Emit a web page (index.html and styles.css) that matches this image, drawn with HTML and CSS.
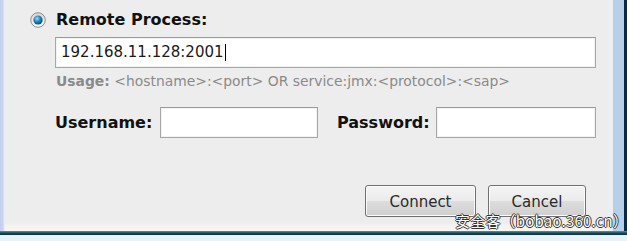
FILE: index.html
```html
<!DOCTYPE html>
<html>
<head>
<meta charset="utf-8">
<link rel="stylesheet" href="styles.css">
</head>
<body>
<div class="window">
  <div class="frame-left"></div>
  <div class="content">
    <div class="radio-row">
      <svg class="radio" width="16" height="16" viewBox="0 0 16 16">
        <defs>
          <radialGradient id="rg" cx="0.4" cy="0.35" r="0.7">
            <stop offset="0" stop-color="#8fe0ff"/>
            <stop offset="0.5" stop-color="#1d87b8"/>
            <stop offset="1" stop-color="#0b3f6a"/>
          </radialGradient>
          <linearGradient id="og" x1="0" y1="0" x2="0" y2="1">
            <stop offset="0" stop-color="#d6d6d6"/>
            <stop offset="1" stop-color="#f7f7f7"/>
          </linearGradient>
        </defs>
        <circle cx="8" cy="8" r="7.3" fill="url(#og)" stroke="#8e8f8f" stroke-width="1"/>
        <circle cx="8" cy="8" r="4.6" fill="url(#rg)"/>
      </svg>
      <span class="label-bold">Remote Process:</span>
    </div>
    <div class="field wide"><span class="caret">192.168.11.128:2001</span></div>
    <div class="usage"><b>Usage:</b> &lt;hostname&gt;:&lt;port&gt; OR service:jmx:&lt;protocol&gt;:&lt;sap&gt;</div>
    <div class="creds">
      <span class="label-bold">Username:</span>
      <div class="field small"></div>
      <span class="label-bold pw">Password:</span>
      <div class="field small"></div>
    </div>
    <div class="buttons">
      <button class="btn connect">Connect</button>
      <button class="btn cancel">Cancel</button>
    </div>
  </div>
  <div class="frame-right"><div class="fr-inner"></div><div class="fr-blue"></div><div class="fr-dark"></div></div>
</div>
<div class="frame-bottom"></div>
<div class="watermark">安全客（bobao.360.cn）</div>
</body>
</html>
```
FILE: styles.css
```css
html, body {
  margin: 0;
  padding: 0;
  width: 627px;
  height: 241px;
  overflow: hidden;
  background: #e9f3f7;
  font-family: "DejaVu Sans", Verdana, sans-serif;
}
.window {
  display: flex;
  height: 231px;
}
.frame-left {
  width: 5px;
  background: linear-gradient(to right, #c3cfee 0, #c9d5f0 3px, #e6e9f3 4px, #eeeeee 5px);
}
.content {
  width: 603px;
  background: linear-gradient(to bottom, #ededed 0, #ededed 223px, #f3f3f0 225px, #f6f6f2 231px);
  display: flex;
  flex-direction: column;
}
.frame-right {
  display: flex;
  width: 19px;
}
.fr-inner { width: 5px; background: #eceef6; }
.fr-blue { width: 11px; background: #b8cfea; }
.fr-dark { width: 3px; background: #0d2842; }
.frame-bottom {
  height: 4px;
  background: linear-gradient(to bottom, #5c98a4 0, #1c4d5a 2px, #0e2a36 4px);
}
.radio-row {
  display: flex;
  align-items: center;
  margin-top: 10px;
  margin-left: 25px;
  height: 19px;
}
.radio { margin-right: 10px; }
.label-bold {
  font-weight: bold;
  font-size: 16px;
  color: #111;
}
.field {
  box-sizing: border-box;
  background: #fff;
  border: 1px solid #a6a6a6;
  border-top-color: #9a9a9a;
  box-shadow: inset 0 0 0 1px #f3f3f3;
  height: 31px;
}
.field.wide {
  margin-top: 8px;
  margin-left: 50px;
  width: 541px;
  display: flex;
  align-items: center;
  padding-left: 5px;
  font-size: 15px;
  color: #1a1a1a;
}
.caret {
  border-right: 1.5px solid #000;
  padding-right: 1px;
  line-height: 17px;
}
.usage {
  margin-top: 6px;
  margin-left: 51px;
  font-size: 13.9px;
  color: #8a8a8a;
  height: 15px;
  line-height: 15px;
  white-space: nowrap;
}
.creds {
  display: flex;
  align-items: center;
  margin-top: 18px;
  margin-left: 50px;
}
.creds .label-bold { width: 105px; }
.creds .label-bold.pw { width: 99px; margin-left: 19px; }
.field.small { width: 158px; }
.creds .field.small:last-child { width: 160px; }
.buttons {
  display: flex;
  justify-content: flex-end;
  gap: 12px;
  margin-top: 47px;
  padding-right: 22px;
}
.btn {
  box-sizing: border-box;
  height: 32px;
  border: 1px solid #707070;
  border-radius: 3px;
  background: linear-gradient(to bottom, #f4f4f4 0, #ebebeb 50%, #dddddd 51%, #cfcfcf 100%);
  box-shadow: inset 0 0 0 1px #fbfbfb;
  font-family: "DejaVu Sans", Verdana, sans-serif;
  font-size: 15px;
  color: #2a2a2a;
  padding: 2px 0 0 0;
}
.btn.connect { width: 111px; }
.btn.cancel { width: 98px; }
.watermark {
  position: absolute;
  left: 455px;
  top: 212px;
  font-family: "Noto Sans CJK SC", "DejaVu Sans", sans-serif;
  font-size: 15px;
  line-height: 18px;
  color: #fff;
  letter-spacing: 0.2px;
  text-shadow: 1px 0 0 #333, -1px 0 0 #333, 0 1px 0 #333, 0 -1px 0 #333;
  white-space: nowrap;
}
```
